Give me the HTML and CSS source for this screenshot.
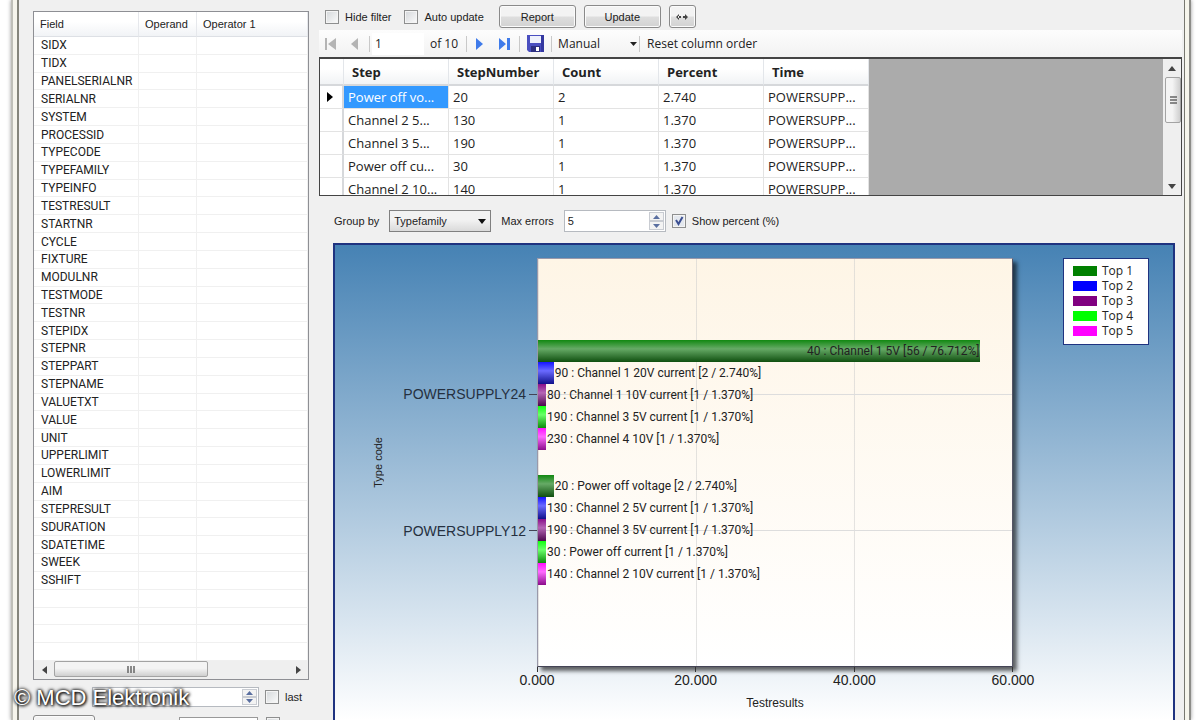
FILE: index.html
```html
<!DOCTYPE html>
<html lang="en">
<head>
<meta charset="utf-8">
<title>Test results</title>
<link rel="stylesheet" href="styles.css">
</head>
<body>
<div class="frame">
<div class="window">
  <aside class="filter">
    <div class="list">
      <div class="list-body">
        <table class="fields">
          <colgroup><col class="col-field"><col class="col-operand"><col></colgroup>
          <thead><tr><th>Field</th><th>Operand</th><th>Operator 1</th></tr></thead>
          <tbody id="field-rows"></tbody>
        </table>
      </div>
      <div class="hscroll">
        <button class="arrow" aria-label="Scroll left"><svg width="5" height="8" viewBox="0 0 5 8"><path d="M5 0v8L0 4z" fill="#444"/></svg></button>
        <div class="htrack"><div class="hthumb"><svg width="9" height="7" viewBox="0 0 9 7"><path d="M1 0v7M4 0v7M7 0v7" stroke="#666" stroke-width="1.5"/></svg></div></div>
        <button class="arrow" aria-label="Scroll right"><svg width="5" height="8" viewBox="0 0 5 8"><path d="M0 0v8l5-4z" fill="#444"/></svg></button>
      </div>
    </div>
    <div class="limits">
      <span class="spin spin-wide">
        <input type="text" aria-label="Limit">
        <span class="updown">
          <button aria-label="Increase"><svg width="7" height="4" viewBox="0 0 7 4"><path d="M0 4h7L3.500 0z" fill="#5a6fa0"/></svg></button>
          <button aria-label="Decrease"><svg width="7" height="4" viewBox="0 0 7 4"><path d="M0 0h7L3.500 4z" fill="#5a6fa0"/></svg></button>
        </span>
      </span>
      <label class="check"><input type="checkbox">last</label>
    </div>
    <div class="limits second">
      <button class="btn btn-small" aria-label="Apply"></button>
      <input class="box" type="text" aria-label="Value">
      <input class="lone" type="checkbox" aria-label="Enable value">
    </div>
  </aside>

  <main class="results">
    <div class="actions">
      <label class="check"><input type="checkbox">Hide filter</label>
      <label class="check"><input type="checkbox">Auto update</label>
      <button class="btn">Report</button>
      <button class="btn">Update</button>
      <button class="btn btn-icon" aria-label="Resize"><svg width="14" height="8" viewBox="0 0 14 8"><path d="M4 1L1 4l3 3zM10 1l3 3-3 3zM3 3h3v2H3zM8 3h3v2H8z" fill="#444"/></svg></button>
    </div>

    <div class="toolbar">
      <button class="tool" aria-label="First page"><svg width="14" height="14" viewBox="0 0 14 14"><path d="M1 1h2v12H1zM12 1v12L4 7z" fill="#b4b4b4"/></svg></button>
      <button class="tool" aria-label="Previous page"><svg width="14" height="14" viewBox="0 0 14 14"><path d="M10 1v12L3 7z" fill="#b4b4b4"/></svg></button>
      <span class="sep"></span>
      <input class="page" type="text" value="1" aria-label="Page">
      <span class="of">of 10</span>
      <span class="sep"></span>
      <button class="tool" aria-label="Next page"><svg width="14" height="14" viewBox="0 0 14 14"><path d="M2 1v12l7-6z" fill="#3f7bea"/></svg></button>
      <button class="tool" aria-label="Last page"><svg width="14" height="14" viewBox="0 0 14 14"><path d="M1 1v12l7-6zM9 1h3v12H9z" fill="#3f7bea"/></svg></button>
      <span class="sep"></span>
      <button class="tool" aria-label="Save"><svg width="17" height="17" viewBox="0 0 17 17"><path d="M0 0h17v17H2l-2-2z" fill="#4a4fc0"/><path d="M3 1h11v7H3z" fill="#eef1fb"/><path d="M4 11h9v6H4z" fill="#2d2f80"/><path d="M9 12h3v4H9z" fill="#fff"/><path d="M14 0h3v17h-3z" fill="#3438a0"/></svg></button>
      <span class="sep"></span>
      <span class="mode">
        <select aria-label="Mode"><option>Manual</option></select>
        <svg width="7" height="4" viewBox="0 0 7 4"><path d="M0 0h7L3.500 4z" fill="#222"/></svg>
      </span>
      <span class="sep"></span>
      <button class="tool">Reset column order</button>
    </div>

    <div class="datagrid">
      <div class="gridview">
        <table class="steps">
          <colgroup><col class="col-mark"><col><col><col><col><col></colgroup>
          <thead><tr><th></th><th>Step</th><th>StepNumber</th><th>Count</th><th>Percent</th><th>Time</th></tr></thead>
          <tbody>
            <tr><td><svg width="6" height="10" viewBox="0 0 6 10"><path d="M0 0v10l6-5z" fill="#000"/></svg></td><td class="selected">Power off vo...</td><td>20</td><td>2</td><td>2.740</td><td>POWERSUPP...</td></tr>
            <tr><td></td><td>Channel 2 5...</td><td>130</td><td>1</td><td>1.370</td><td>POWERSUPP...</td></tr>
            <tr><td></td><td>Channel 3 5...</td><td>190</td><td>1</td><td>1.370</td><td>POWERSUPP...</td></tr>
            <tr><td></td><td>Power off cu...</td><td>30</td><td>1</td><td>1.370</td><td>POWERSUPP...</td></tr>
            <tr><td></td><td>Channel 2 10...</td><td>140</td><td>1</td><td>1.370</td><td>POWERSUPP...</td></tr>
          </tbody>
        </table>
      </div>
      <div class="vscroll">
        <button class="arrow" aria-label="Scroll up"><svg width="8" height="5" viewBox="0 0 8 5"><path d="M0 5h8L4 0z" fill="#444"/></svg></button>
        <div class="vtrack"><div class="vthumb"><svg width="7" height="9" viewBox="0 0 7 9"><path d="M0 1h7M0 4h7M0 7h7" stroke="#666" stroke-width="1.500"/></svg></div></div>
        <button class="arrow" aria-label="Scroll down"><svg width="8" height="5" viewBox="0 0 8 5"><path d="M0 0h8L4 5z" fill="#444"/></svg></button>
      </div>
    </div>

    <div class="options">
      <label for="group">Group by</label>
      <span class="combo">
        <select id="group"><option>Typefamily</option></select>
        <svg width="8" height="5" viewBox="0 0 8 5"><path d="M0 0h8L4 5z" fill="#111"/></svg>
      </span>
      <label for="max">Max errors</label>
      <span class="spin">
        <input id="max" type="text" value="5">
        <span class="updown">
          <button aria-label="Increase"><svg width="7" height="4" viewBox="0 0 7 4"><path d="M0 4h7L3.500 0z" fill="#5a6fa0"/></svg></button>
          <button aria-label="Decrease"><svg width="7" height="4" viewBox="0 0 7 4"><path d="M0 0h7L3.500 4z" fill="#5a6fa0"/></svg></button>
        </span>
      </span>
      <label class="check"><input type="checkbox" checked>Show percent (%)</label>
    </div>

    <section class="chart">
      <div class="ytitle">Type code</div>
      <div class="categories">
        <div class="category">POWERSUPPLY24</div>
        <div class="category">POWERSUPPLY12</div>
      </div>
      <div class="plot" id="plot"></div>
      <ul class="legend">
        <li><i class="top1"></i>Top 1</li>
        <li><i class="top2"></i>Top 2</li>
        <li><i class="top3"></i>Top 3</li>
        <li><i class="top4"></i>Top 4</li>
        <li><i class="top5"></i>Top 5</li>
      </ul>
      <div class="xaxis"><span>0.000</span><span>20.000</span><span>40.000</span><span>60.000</span></div>
      <div class="xtitle">Testresults</div>
    </section>
  </main>
</div>
</div>
<div class="watermark">© MCD Elektronik</div>
<script src="app.js"></script>
</body>
</html>
```

FILE: styles.css
```css
* { box-sizing: border-box; }

body {
  margin: 0;
  height: 100vh;
  overflow: hidden;
  background: #fff;
  color: #222;
  font: 11px/14px "Liberation Sans", Arial, sans-serif;
}

button, input, select { font: inherit; color: inherit; margin: 0; }
button { border: 0; padding: 0; background: none; }
svg { display: block; flex: none; }

.frame {
  height: 100%;
  margin: 0 9px 0 11px;
  padding: 0 4px;
  background: #f6f5ec;
  border-left: 2px solid #bfbfb8;
  border-right: 2px solid #8c8c88;
  box-shadow: 0 0 4px #999;
}

.window {
  display: flex;
  gap: 10px;
  height: 100%;
  padding: 0 2px 0 14px;
  overflow: hidden;
  background: #f0f0f0;
  border-left: 2px solid #85857c;
  border-right: 1px solid #77776f;
}

/* Filter list */
.filter {
  flex: none;
  width: 276px;
  display: flex;
  flex-direction: column;
  padding-top: 11px;
}

.list {
  flex: 1;
  min-height: 0;
  display: flex;
  flex-direction: column;
  background: #fff;
  border: 1px solid #8e8f94;
}

.list-body { flex: 1; min-height: 0; }

.fields {
  width: 100%;
  height: 100%;
  table-layout: fixed;
  border-collapse: separate;
  border-spacing: 0;
}

.col-field { width: 105px; }
.col-operand { width: 58px; }

.fields th {
  height: 25px;
  padding: 0 6px;
  text-align: left;
  font-weight: normal;
  background: linear-gradient(#fff 40%, #f1f3f6);
  border-right: 1px solid #e6e8ec;
  border-bottom: 1px solid #dde0e5;
}

.fields td {
  padding: 0 7px;
  font: 12px/14px Roboto, "Liberation Sans", sans-serif;
  border-right: 1px solid #f0f0f0;
  border-bottom: 1px solid #f0f0f0;
}

.hscroll { display: flex; height: 18px; background: #efefef; }
.arrow { display: grid; place-items: center; flex: none; }
.hscroll .arrow { width: 20px; }
.htrack { flex: 1; }

.hthumb {
  display: grid;
  place-items: center;
  width: 66%;
  height: 16px;
  border: 1px solid #a3a3a3;
  border-radius: 2px;
  background: linear-gradient(#f4f4f4 45%, #cfcfcf);
}

.limits {
  display: flex;
  align-items: center;
  gap: 6px;
  padding: 7px 0 8px 59px;
}

.limits.second { align-items: flex-start; gap: 8px; height: 5px; padding: 0; }
.btn.btn-small { min-width: 62px; }
.box { width: 79px; height: 20px; margin: 2px 0 0 auto; border: 1px solid #999; background: #fff; }
.lone { margin: 2px 29px 0 0; }

input[type="checkbox"] {
  appearance: none;
  flex: none;
  width: 14px;
  height: 14px;
  border: 1px solid #8e8f8f;
  background: linear-gradient(135deg, #d4d7da, #fbfbfb);
  box-shadow: inset 0 0 0 1px #f4f4f4;
}

input[type="checkbox"]:checked {
  background: url('data:image/svg+xml,<svg xmlns="http://www.w3.org/2000/svg" viewBox="0 0 12 12"><path d="M3 5l2.500 4L9.500 2" fill="none" stroke="%233b4f92" stroke-width="2"/></svg>'), #e4e8ee;
}

.check { display: flex; align-items: center; gap: 6px; }

.spin {
  display: flex;
  width: 102px;
  height: 22px;
  padding: 1px;
  background: #fff;
  border: 1px solid #b6bac0;
}

.spin-wide { width: 167px; height: 20px; }
.spin input { flex: 1; min-width: 0; padding: 0 2px; border: 0; background: none; }
.updown { display: flex; flex-direction: column; width: 15px; }
.updown button { flex: 1; display: grid; place-items: center; border: 1px solid #c9ccd2; background: #f3f3f3; }

/* Buttons above the grid */
.results { flex: 1; min-width: 0; display: flex; flex-direction: column; }
.actions { display: flex; align-items: center; gap: 8px; padding: 5px 0 2px 6px; }
.actions .check + .check { margin: 0 7px 0 5px; }

.btn {
  display: grid;
  place-items: center;
  min-width: 77px;
  height: 23px;
  border: 1px solid #8a8a8a;
  border-radius: 3px;
  background: linear-gradient(#f3f3f3 48%, #dedede 52%, #d2d2d2);
  box-shadow: inset 0 0 0 1px #fbfbfb;
}

.btn.btn-icon { min-width: 27px; }

.toolbar {
  display: flex;
  align-items: center;
  height: 27px;
  font: 12px/16px "Open Sans", sans-serif;
  background: linear-gradient(#fdfdfd, #f2f2f2);
}

.tool { padding: 0 5px; white-space: nowrap; }
.sep { flex: none; width: 1px; height: 16px; margin: 0 2px; background: #c9c9c9; }
.page { width: 52px; height: 22px; padding: 0 3px; border: 0; background: #fff; }
.of { padding: 0 6px; }
.mode { display: flex; align-items: center; width: 83px; }
.mode select { flex: 1; appearance: none; padding: 0 4px; border: 0; background: none; }

/* Data grid */
.datagrid {
  display: flex;
  height: 139px;
  border: 1px solid #444;
  border-top-width: 2px;
  background: #ababab;
}

.gridview { flex: 1; min-width: 0; overflow: hidden; }

.steps {
  width: 549px;
  table-layout: fixed;
  border-collapse: separate;
  border-spacing: 0;
  background: #fff;
  font: 13px/18px "Open Sans", sans-serif;
}

.col-mark { width: 24px; }
.steps th {
  height: 27px;
  padding: 0 8px;
  text-align: left;
  font-weight: bold;
  background: linear-gradient(#fff 40%, #f1f3f5);
  border-right: 1px solid #e3e6ea;
  border-bottom: 2px solid #d6d8db;
}
.steps td {
  height: 23px;
  padding: 0 4px;
  white-space: nowrap;
  border-right: 1px solid #e3e3e3;
  border-bottom: 1px solid #e3e3e3;
}
.steps td:first-child { padding-left: 7px; border-right: 2px solid #d6d8db; }
.steps td.selected { color: #fff; background: #3399ff; }

.vscroll { display: flex; flex-direction: column; width: 18px; background: #efefef; }
.vscroll .arrow { height: 18px; }
.vtrack { flex: 1; padding-left: 2px; }
.vthumb {
  display: grid;
  place-items: center;
  height: 46px;
  border: 1px solid #a3a3a3;
  border-radius: 2px;
  background: linear-gradient(90deg, #f4f4f4 45%, #cfcfcf);
}

.options {
  display: flex;
  align-items: center;
  gap: 10px;
  padding: 14px 0 11px 15px;
}

.combo {
  display: flex;
  align-items: center;
  width: 102px;
  height: 22px;
  padding-right: 4px;
  border: 1px solid #808080;
  background: linear-gradient(#f2f2f2 45%, #dadada);
}
.combo select { flex: 1; appearance: none; padding: 0 4px; border: 0; background: none; }
.options .check { margin-left: -4px; }

/* Chart */
.chart {
  flex: 1;
  display: grid;
  grid-template-columns: 50px 152px minmax(0, 1fr) 160px;
  grid-template-rows: minmax(0, 1fr) 24px 29px;
  margin: 0 7px 0 14px;
  padding-top: 13px;
  border: 2px solid #1f3380;
  border-bottom: 0;
  background: linear-gradient(#4682b4, #fff);
}

.ytitle {
  place-self: center end;
  writing-mode: vertical-rl;
  transform: rotate(180deg);
}

.categories { display: flex; flex-direction: column; justify-content: center; }
.category {
  display: flex;
  align-items: center;
  justify-content: flex-end;
  gap: 3px;
  height: 33.3333%;
  font-size: 14px;
  line-height: 16px;
  color: #253040;
}
.category::after { content: ""; width: 8px; height: 1px; background: #445; }

.plot {
  display: flex;
  flex-direction: column;
  justify-content: center;
  border: 1px solid #99a;
  border-right-color: #556;
  border-bottom-color: #445;
  background:
    linear-gradient(90deg, #ccc8 1px, transparent 1px) 0 0 / 33.3333% 100%,
    linear-gradient(#fef5e6, #fff);
  box-shadow: 4px 4px 4px #0009;
}

.group {
  display: flex;
  flex-direction: column;
  justify-content: center;
  height: 33.3333%;
  background: linear-gradient(#ddd, #ddd) 0 50% / 100% 1px no-repeat;
}

.bar-row { display: flex; align-items: center; height: 22px; font: 12px/14px Roboto, "Liberation Sans", sans-serif; white-space: nowrap; }
.bar { display: flex; align-items: center; justify-content: flex-end; flex: none; align-self: stretch; padding-right: 1px; }
.bar-row > span { padding-left: 1px; }

.bar.top1 { background: linear-gradient(#118811, #66aa66 40%, #0f4f0f); }
.bar.top2 { background: linear-gradient(#1515ff, #6a6aff 40%, #10108a); }
.bar.top3 { background: linear-gradient(#8a108a, #b566b5 40%, #4d084d); }
.bar.top4 { background: linear-gradient(#10ff10, #6aff6a 40%, #0c8a0c); }
.bar.top5 { background: linear-gradient(#ff10ff, #ff6aff 40%, #8a0c8a); }

.legend {
  place-self: start end;
  width: 86px;
  margin: 0 24px 0 0;
  padding: 4px 9px 6px;
  list-style: none;
  border: 1px solid #1f3380;
  background: #fff;
  font: 12px/15px "Open Sans", sans-serif;
}
.legend li { display: flex; align-items: center; gap: 5px; }
.legend i { width: 24px; height: 10px; }
.legend .top1 { background: #008000; }
.legend .top2 { background: #0000ff; }
.legend .top3 { background: #800080; }
.legend .top4 { background: #00ff00; }
.legend .top5 { background: #ff00ff; }

.xaxis {
  grid-column: 3;
  display: flex;
  justify-content: space-between;
  font-size: 14px;
  line-height: 16px;
}
.xaxis span { display: flex; flex-direction: column; align-items: center; width: 0; white-space: nowrap; }
.xaxis span::before { content: ""; flex: none; width: 1px; height: 5px; background: #333; }

.xtitle { grid-column: 3; text-align: center; font-size: 12px; padding-top: 5px; }

.watermark {
  position: absolute;
  left: 14px;
  bottom: 10px;
  font-size: 22px;
  line-height: 24px;
  color: #fff;
  text-shadow: 0 0 3px #000, 1px 1px 3px #000, 0 0 4px #333;
}
```

FILE: app.js
```js
const fields = `SIDX TIDX PANELSERIALNR SERIALNR SYSTEM PROCESSID TYPECODE TYPEFAMILY TYPEINFO
TESTRESULT STARTNR CYCLE FIXTURE MODULNR TESTMODE TESTNR STEPIDX STEPNR STEPPART STEPNAME
VALUETXT VALUE UNIT UPPERLIMIT LOWERLIMIT AIM STEPRESULT SDURATION SDATETIME SWEEK SSHIFT`.split(/\s+/);
const blanks = Array(4).fill("&nbsp;");

document.getElementById("field-rows").innerHTML = fields.concat(blanks)
  .map(name => `<tr><td>${name}</td><td></td><td></td></tr>`).join("");

const axisMax = 60;
const groups = [
  [
    [56, "40 : Channel 1 5V [56 / 76.712%]"],
    [2, "90 : Channel 1 20V current [2 / 2.740%]"],
    [1, "80 : Channel 1 10V current [1 / 1.370%]"],
    [1, "190 : Channel 3 5V current [1 / 1.370%]"],
    [1, "230 : Channel 4 10V [1 / 1.370%]"]
  ],
  [
    [2, "20 : Power off voltage [2 / 2.740%]"],
    [1, "130 : Channel 2 5V current [1 / 1.370%]"],
    [1, "190 : Channel 3 5V current [1 / 1.370%]"],
    [1, "30 : Power off current [1 / 1.370%]"],
    [1, "140 : Channel 2 10V current [1 / 1.370%]"]
  ]
];

document.getElementById("plot").innerHTML = groups.map(group =>
  `<div class="group">${group.map(([count, text], i) => {
    const inside = count > axisMax / 2;
    const label = `<span>${text}</span>`;
    return `<div class="bar-row"><div class="bar top${i + 1}" style="width:${count / axisMax * 100}%">${inside ? label : ""}</div>${inside ? "" : label}</div>`;
  }).join("")}</div>`).join("");
```
